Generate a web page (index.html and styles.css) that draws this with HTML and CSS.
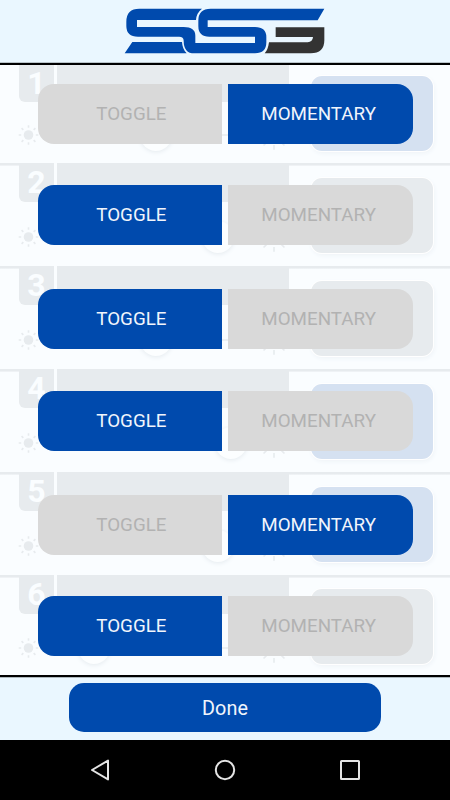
FILE: index.html
```html
<!DOCTYPE html>
<html lang="en">
<head>
<meta charset="utf-8">
<meta name="viewport" content="width=device-width, initial-scale=1">
<title>Switch modes</title>
<link rel="stylesheet" href="styles.css">
</head>
<body>
<header class="header">
  <svg class="logo" viewBox="0 0 690 180" role="img" aria-label="Logo">
    <path class="logo-blue" d="M276 26H88Q49 26 49 65V78Q49 110 84 110H207Q221 110 221 122Q221 160 253 160H435Q469 160 469 127V111Q469 81 435 81H293V61H623L643 26H302Q265 26 265 62V79Q265 110 298 110H435V129H256V107Q256 81 221 81H81V60H258Q259 39 276 26Z"/>
    <path class="logo-blue" d="M67 126H216Q217 147 230 160H44Z"/>
    <path class="logo-dark" d="M497 82H643V121Q643 160 602 160H464Q474 150 477 127H593Q608 126 609 111H497Z"/>
  </svg>
</header>
<main class="list"></main>
<footer class="footer"><button class="done">Done</button></footer>
<nav class="navbar">
  <svg viewBox="0 0 24 24"><path d="M20 2.6V21.4L4 12Z"/></svg>
  <svg viewBox="0 0 24 24"><circle cx="12" cy="12" r="9.2"/></svg>
  <svg viewBox="0 0 24 24"><rect x="3" y="3" width="18" height="18" rx=".5"/></svg>
</nav>
<script src="app.js"></script>
</body>
</html>
```
FILE: styles.css
```css
* { box-sizing: border-box; }
body {
  margin: 0;
  height: 800px;
  display: flex;
  flex-direction: column;
  overflow: hidden;
  background: #fafdff;
  font-family: Roboto, sans-serif;
}
.header {
  height: 65px;
  flex: none;
  display: flex;
  justify-content: center;
  background: #eaf7ff;
  border-bottom: 2px solid #000;
  box-shadow: inset 0 -1px #b9c4ca;
}
.logo { width: 230px; height: 60px; }
.logo-blue { fill: #004aad; }
.logo-dark { fill: #333; }
.list { height: 610px; flex: none; overflow: hidden; }
.row {
  position: relative;
  height: 103px;
  display: grid;
  grid-template-columns: 35px 235px 1fr;
  padding: 0 16px 0 19px;
  background: linear-gradient(#e7ebee, #e7ebee) 0 0 / 100% 2.6px no-repeat;
}
.row:first-child { height: 98px; background: none; }
.row:first-child .badge, .row:first-child .title { height: 37px; }
.badge {
  height: 39px;
  border-radius: 0 0 0 6px;
  background: #e7ebee;
  color: #fafdff;
  font-size: 32px;
  font-weight: 700;
  line-height: 38px;
  text-align: center;
}
.row:first-child .badge { line-height: 37px; }
.title { height: 39px; background: #e7ebee; border-left: 3px solid #fafdff; }
.output {
  width: 122px;
  height: 75px;
  margin: 15px 1px 0 0;
  justify-self: end;
  border-radius: 11px;
  background: #e7ebee;
  box-shadow: 0 0 0 1px #fff, 1px 2px 5px #edf2f6;
}
.row:first-child .output { margin-top: 11px; }
.row:nth-child(6) .output { margin-top: 14px; }
.output.on { background: #d5e1f1; }
.dimmer { position: absolute; left: 0; top: 57px; width: 300px; height: 40px; }
.row:first-child .dimmer { top: 53px; }
.row:nth-child(6) .dimmer { top: 56px; }
.track, .ray { stroke: #e7ebee; stroke-width: 1.6; fill: none; }
.sun { fill: #e7ebee; }
.knob { fill: #fcfeff; filter: drop-shadow(0 1px 2px #e4eaee); }
.modes {
  position: absolute;
  top: 22px;
  left: 37.5px;
  width: 375px;
  height: 60px;
  display: grid;
  grid-template-columns: 1fr 1fr;
  gap: 5.5px;
}
.row:first-child .modes { top: 18.7px; }
.row:nth-child(odd):not(:first-child) .modes { top: 23px; }
.row:nth-child(6) .modes { top: 21.4px; }
.mode {
  border: 0;
  padding: 0 0 0 3px;
  background: #d9d9d9;
  color: #b2b2b2;
  font: 400 18.8px/60px Roboto, sans-serif;
}
.mode:first-child { border-radius: 16px 0 0 16px; }
.mode:last-child { border-radius: 0 16px 16px 0; padding: 0 3px 0 0; }
.mode.active { background: #004aad; color: #f1f5fc; }
.footer {
  height: 65px;
  flex: none;
  display: flex;
  justify-content: center;
  align-items: flex-start;
  padding-top: 5.5px;
  background: #eaf7ff;
  border-top: 2px solid #000;
  box-shadow: inset 0 1px #aeb9be;
}
.done {
  width: 312px;
  height: 49.5px;
  border: 0;
  border-radius: 15px;
  background: #004aad;
  color: #f1f5fc;
  font: 400 19.8px/46px Roboto, sans-serif;
  letter-spacing: .1px;
  padding: 3px 0 0;
}
.navbar {
  height: 60px;
  flex: none;
  display: flex;
  justify-content: center;
  align-items: center;
  gap: 101px;
  background: #000;
}
.navbar svg { width: 24px; height: 24px; fill: none; stroke: #e4e4e4; stroke-width: 2; stroke-linejoin: round; }
```
FILE: app.js
```js
const rows = [
  { knob: 156, mode: "MOMENTARY", on: true },
  { knob: 218, mode: "TOGGLE", on: false },
  { knob: 156, mode: "TOGGLE", on: false },
  { knob: 231, mode: "TOGGLE", on: true },
  { knob: 218, mode: "MOMENTARY", on: true },
  { knob: 94, mode: "TOGGLE", on: false }
];

// Eight rays around a centre point, from the inner to the outer radius
function rays(cx, cy, inner, outer) {
  let d = "";
  for (let i = 0; i < 8; i++) {
    const x = Math.cos(i * Math.PI / 4), y = Math.sin(i * Math.PI / 4);
    d += `M${cx + x * inner} ${cy + y * inner}L${cx + x * outer} ${cy + y * outer}`;
  }
  return `<path class="ray" d="${d}"/>`;
}

document.querySelector(".list").innerHTML = rows.map((row, i) => `
  <section class="row">
    <div class="badge">${i + 1}</div>
    <div class="title"></div>
    <div class="output ${row.on ? "on" : ""}"></div>
    <svg class="dimmer" viewBox="0 0 300 40">
      <circle class="sun" cx="28.5" cy="17" r="4.8"/>${rays(28.5, 17, 7.3, 9.8)}
      <path class="track" d="M50 17H250"/>
      <circle class="sun" cx="274" cy="17" r="7"/>${rays(274, 17, 10, 14.8)}
      <circle class="knob" cx="${row.knob}" cy="17" r="16"/>
    </svg>
    <div class="modes">
      ${["TOGGLE", "MOMENTARY"].map(m => `<button class="mode ${m === row.mode ? "active" : ""}">${m}</button>`).join("")}
    </div>
  </section>`).join("");
```
